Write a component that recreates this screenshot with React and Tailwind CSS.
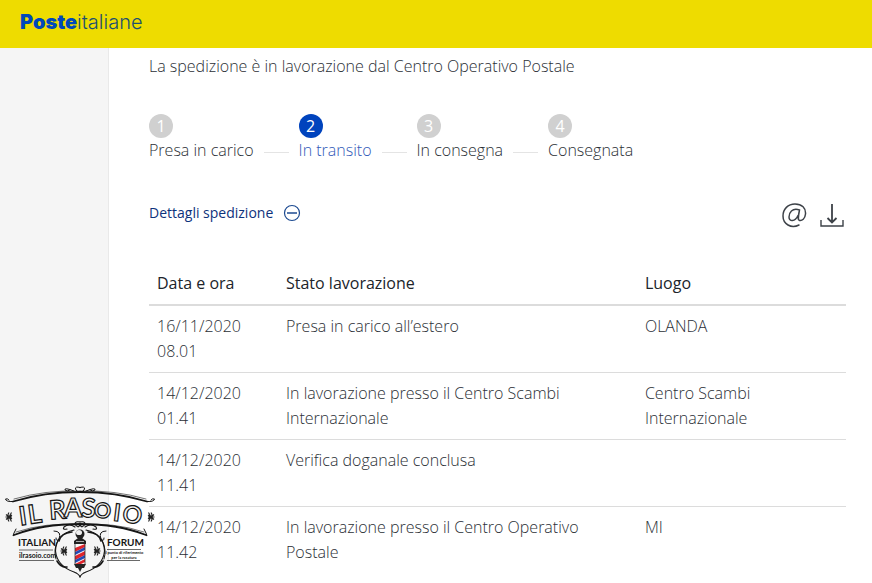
import React, { useState } from 'react';

const steps = [
    { id: 1, label: 'Presa in carico' },
    { id: 2, label: 'In transito' },
    { id: 3, label: 'In consegna' },
    { id: 4, label: 'Consegnata' },
];

const events = [
    { date: '16/11/2020', time: '08.01', status: 'Presa in carico all’estero', place: 'OLANDA' },
    { date: '14/12/2020', time: '01.41', status: 'In lavorazione presso il Centro Scambi Internazionale', place: 'Centro Scambi Internazionale' },
    { date: '14/12/2020', time: '11.41', status: 'Verifica doganale conclusa', place: '' },
    { date: '14/12/2020', time: '11.42', status: 'In lavorazione presso il Centro Operativo Postale', place: 'MI' },
];

function Header() {
    return (
        <header className="flex h-12 items-center bg-[#eedc00] px-5">
            <a href="#" className="pb-1 font-['Inter','Liberation_Sans',sans-serif] text-xl text-[#0047bb]">
                <span className="font-black">Poste</span>
                <span className="text-[#1d5070]">italiane</span>
            </a>
        </header>
    );
}

function Stepper({ current }) {
    return (
        <ol className="mt-9 flex items-start">
            {steps.map((s, i) => (
                <li key={s.id} className="flex items-end">
                    <div>
                        <span className={`flex h-6 w-6 items-center justify-center rounded-full font-normal text-white ${s.id === current ? 'bg-[#0043bd]' : 'bg-[#d0d0d0]'}`}>{s.id}</span>
                        <span className={`block leading-[25px] ${s.id === current ? 'text-[#3058b8]' : ''}`}>{s.label}</span>
                    </div>
                    {i < steps.length - 1 && <span className="mx-2.5 mb-2.5 h-px w-[25px] bg-[#e4e4e4]" />}
                </li>
            ))}
        </ol>
    );
}

function Flourish({ x, y, flip }) {
    return (
        <g transform={`translate(${x} ${y}) scale(${flip ? -1 : 1} 1)`} stroke="#222" strokeWidth="1.1" fill="none">
            <path d="M-3.500 0H3M0 -4.500Q-2 -2 0 0Q-2 2 0 4.500M2.500 -4.500L0 0L2.500 4.500M-3 -2.500L0 0L-3 2.500M3 -2L0 0L3 2" />
        </g>
    );
}

function HalfFrame() {
    return (
        <g fill="none" stroke="#161616" strokeLinecap="round">
            <path d="M13 21.500Q44 12 80 12" strokeWidth="1.800" />
            <path d="M14 19Q45 10 80 11" strokeWidth=".6" />
            <path d="M13 21.500Q6 22 5.500 19Q8 18 9 20" strokeWidth="1" />
            <path d="M80 7.500Q75 6 75.500 9Q76 12 80 12M74 11Q64 7 65 10Q67 12 70 10" strokeWidth="1" />
            <path d="M14 55Q42 44 80 44" strokeWidth="1.800" />
            <path d="M16 52Q46 42 80 45" strokeWidth=".6" />
            <path d="M14 55Q12 58 14 53L16 49" strokeWidth="1" />
            <path d="M80 42Q75 41 75 44Q78 49 80 45M75 47Q69 43 64 47Q62 50 67 49" strokeWidth="1.200" />
            <path d="M54 51Q62 51 59 59Q56 62 56 58M58 60Q53 70 56 79" strokeWidth="1" />
            <path d="M74 50Q56 54 55.500 71Q57 86 74 92Q79 94 80 97" strokeWidth="1.100" />
            <path d="M72 52Q61 53 59 61M57 81Q61 88 67 87" strokeWidth="1.600" />
        </g>
    );
}

function ForumBadge() {
    return (
        <svg viewBox="0 0 160 103" className="pointer-events-none absolute bottom-0 left-0 w-40" role="img" aria-label="Il Rasoio Italian Forum">
            <HalfFrame />
            <g transform="translate(160 0) scale(-1 1)"><HalfFrame /></g>
            <Flourish x={9} y={37} />
            <Flourish x={151} y={37} flip />
            <Flourish x={64} y={71} />
            <Flourish x={97} y={71} flip />

            <g className="font-['Lato','Liberation_Sans',sans-serif] font-bold" fontSize="26" fill="#f5f5f5" stroke="#161616" strokeWidth="1.200" textAnchor="middle">
                <text transform="translate(24 45) rotate(-8)">I</text>
                <text transform="translate(36 43) rotate(-8)">L</text>
                <text transform="translate(58 39) rotate(-4)">R</text>
                <text transform="translate(73 37)">A</text>
                <text transform="translate(88 37) rotate(3)">S</text>
                <text transform="translate(102 38) rotate(5)" fontSize="21">O</text>
                <text transform="translate(116 41) rotate(7)" fontSize="24">I</text>
                <text transform="translate(131 43) rotate(9)" fontSize="24">O</text>
            </g>

            <g className="font-['Lato','Liberation_Sans',sans-serif] font-bold" fill="#161616">
                <text x="18" y="66" fontSize="10">ITALIAN</text>
                <text x="107" y="66" fontSize="10">FORUM</text>
                <text x="19" y="78" fontSize="7">ilrasoio.com</text>
                <text x="124" y="74" fontSize="4" textAnchor="middle">il punto di riferimento</text>
                <text x="124" y="79" fontSize="4" textAnchor="middle">per la rasatura</text>
            </g>
            <path d="M19 70H53M19 80.500H54M107 69.500H141M107 80.500H140" stroke="#444" strokeWidth=".8" />

            <circle cx="80" cy="54" r="4.500" fill="#222" />
            <ellipse cx="79" cy="52.500" rx="3" ry="2.600" fill="#eee" />
            <path d="M78 58H82L86 61V64H74V61Z" fill="#222" />
            <path d="M76 61.500H84" stroke="#ccc" strokeWidth=".8" />
            <path d="M75 64H85V84H75Z" fill="#f8f8f8" />
            <path d="M75 68L85 64V67L75 72ZM75 76L85 71V75L75 80ZM75 84L85 79V82L81 84Z" fill="#e0242b" />
            <path d="M75 72L85 67V70L75 75ZM75 80L85 75V78L75 83Z" fill="#2449b5" />
            <path d="M75 64V84M85 64V84" stroke="#333" strokeWidth=".8" />
            <path d="M74 84H86L84 88H76Z" fill="#222" />
            <path d="M78 88H82L80 92Z" fill="#222" />
        </svg>
    );
}

export default function App() {
    const [open, setOpen] = useState(true);

    return (
        <div className="relative flex min-h-screen flex-col bg-white font-['Open_Sans','Noto_Sans',sans-serif] text-base font-light text-[#2b2f36]">
            <Header />
            <div className="flex flex-1">
                <aside className="w-1/8 shrink-0 border-r border-[#e9e9e9] bg-[#f5f5f5]" />
                <main className="min-w-0 flex-1 pt-1.5 pr-[26px] pb-2 pl-10">
                    <p className="leading-6">La spedizione è in lavorazione dal Centro Operativo Postale</p>

                    <Stepper current={2} />

                    <div className="mt-[35px] flex items-center justify-between">
                        <button onClick={() => setOpen(!open)} aria-expanded={open} className="flex cursor-pointer items-center gap-2.5 text-sm font-normal text-[#0d327c]">
                            Dettagli spedizione
                            <svg viewBox="0 0 18 18" className="h-[18px] w-[18px]" fill="none" stroke="#1c4a91">
                                <circle cx="9" cy="9" r="7.500" strokeWidth="1.200" />
                                <path d="M4 9H14" strokeWidth="1.500" />
                            </svg>
                        </button>
                        <div className="mt-1 flex items-center gap-3 pr-px">
                            <button aria-label="Invia per email" className="cursor-pointer">
                                <svg viewBox="0 0 26 26" className="h-[26px] w-[26px]" fill="none" stroke="#3d4248" strokeWidth="1.500" strokeLinecap="round">
                                    <path d="M18 23C10 27 2 22 2 14C2 7 7 2 14 2C21 2 25 6 24.500 12C24 17 21 19 18.500 18.500C16.500 18 17 15.500 18.500 8C11 5.500 8 11 8 15C8 20 14 20 17 13.500" />
                                </svg>
                            </button>
                            <button aria-label="Scarica" className="cursor-pointer">
                                <svg viewBox="0 0 26 26" className="h-[26px] w-[26px]" fill="none" stroke="#3d4248" strokeWidth="1.400">
                                    <path d="M13 2V20M8.500 16L13 20.500L17.500 16" strokeWidth="1.800" />
                                    <path d="M2 18V24H24V18" />
                                </svg>
                            </button>
                        </div>
                    </div>

                    {open && (
                        <table className="mt-[33px] w-full table-fixed text-left leading-[25px]">
                            <thead>
                                <tr className="border-b-2 border-[#dcdcdc] text-[#20242a]">
                                    <th className="w-[129px] px-2 pt-2.5 pb-2 font-normal">Data e ora</th>
                                    <th className="px-2 pt-2.5 pb-2 font-normal">Stato lavorazione</th>
                                    <th className="w-[30%] px-2 pt-2.5 pb-2 font-normal">Luogo</th>
                                </tr>
                            </thead>
                            <tbody>
                                {events.map((e, i) => (
                                    <tr key={i} className="border-b border-[#dcdcdc] align-top last:border-b-0">
                                        <td className="p-2">{e.date}<br />{e.time}</td>
                                        <td className="py-2 pr-10 pl-2">{e.status}</td>
                                        <td className="py-2 pr-10 pl-2">{e.place}</td>
                                    </tr>
                                ))}
                            </tbody>
                        </table>
                    )}
                </main>
            </div>
            <ForumBadge />
        </div>
    );
}
